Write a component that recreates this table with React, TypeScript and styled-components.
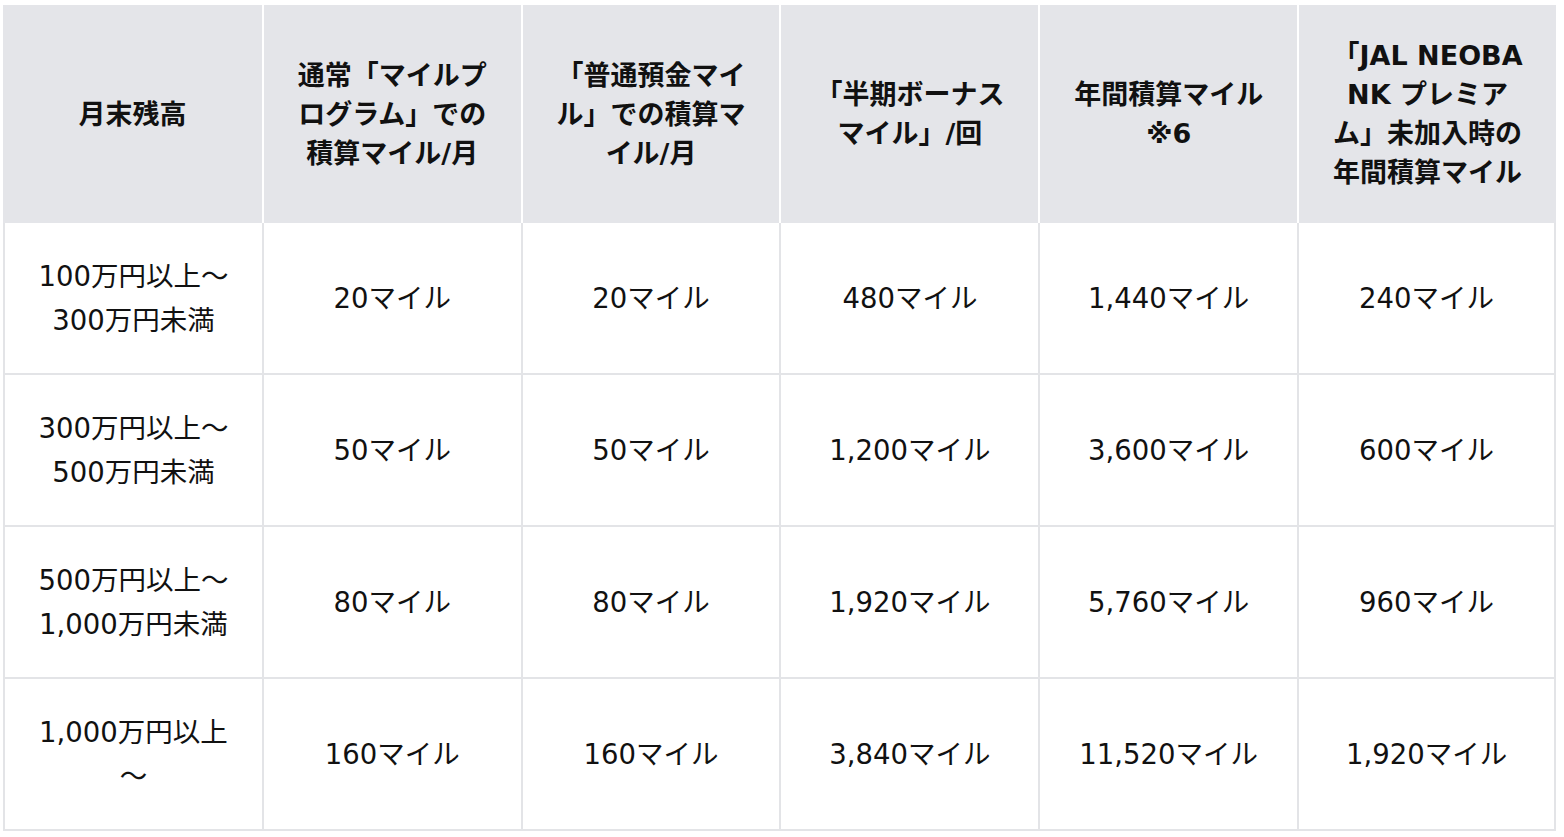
import React from 'react';
import styled, { createGlobalStyle } from 'styled-components';

const GlobalStyle = createGlobalStyle`
  html, body {
    margin: 0;
    padding: 0;
    background: #fff;
  }
  body {
    font-family: "DejaVu Sans", "Noto Sans CJK JP", sans-serif;
    color: #111;
  }
`;

// 표 전체 감싸는 영역
const PageDiv = styled.div`
  padding: 5px 0 0 3px;
`;

const MileTable = styled.table`
  width: 1553px;
  border-collapse: separate;
  border-spacing: 0;
  table-layout: fixed;
`;

const HeadCell = styled.th`
  height: 218px;
  padding: 0 10px;
  background-color: #e4e5e9;
  border-left: 2px solid #fff;
  font-size: 27px;
  font-weight: bold;
  line-height: 39px;
  text-align: center;
  vertical-align: middle;
  white-space: nowrap;
  color: #111;

  &:first-child {
    border-left: 0;
  }
`;

const BodyCell = styled.td`
  height: 150px;
  padding: 0 10px;
  border-left: 2px solid #e3e4e7;
  border-bottom: 2px solid #e3e4e7;
  font-size: 27.5px;
  line-height: 44px;
  text-align: center;
  vertical-align: middle;
  white-space: nowrap;

  &:last-child {
    border-right: 2px solid #e3e4e7;
  }
`;

const headers: string[][] = [
  ['月末残高'],
  ['通常「マイルプ', 'ログラム」での', '積算マイル/月'],
  ['「普通預金マイ', 'ル」での積算マ', 'イル/月'],
  ['「半期ボーナス', 'マイル」/回'],
  ['年間積算マイル', '※6'],
  ['「JAL NEOBA', 'NK プレミア', 'ム」未加入時の', '年間積算マイル'],
];

const rows: string[][][] = [
  [['100万円以上～', '300万円未満'], ['20マイル'], ['20マイル'], ['480マイル'], ['1,440マイル'], ['240マイル']],
  [['300万円以上～', '500万円未満'], ['50マイル'], ['50マイル'], ['1,200マイル'], ['3,600マイル'], ['600マイル']],
  [['500万円以上～', '1,000万円未満'], ['80マイル'], ['80マイル'], ['1,920マイル'], ['5,760マイル'], ['960マイル']],
  [['1,000万円以上', '～'], ['160マイル'], ['160マイル'], ['3,840マイル'], ['11,520マイル'], ['1,920マイル']],
];

const Lines = ({ lines }: { lines: string[] }) => (
  <>
    {lines.map((line, i) => (
      <React.Fragment key={i}>
        {i > 0 && <br />}
        {line}
      </React.Fragment>
    ))}
  </>
);

export default function App() {
  return (
    <PageDiv>
      <GlobalStyle />
      <MileTable>
        <thead>
          <tr>
            {headers.map((h, i) => (
              <HeadCell key={i}>
                <Lines lines={h} />
              </HeadCell>
            ))}
          </tr>
        </thead>
        <tbody>
          {rows.map((row, r) => (
            <tr key={r}>
              {row.map((cell, c) => (
                <BodyCell key={c}>
                  <Lines lines={cell} />
                </BodyCell>
              ))}
            </tr>
          ))}
        </tbody>
      </MileTable>
    </PageDiv>
  );
}
